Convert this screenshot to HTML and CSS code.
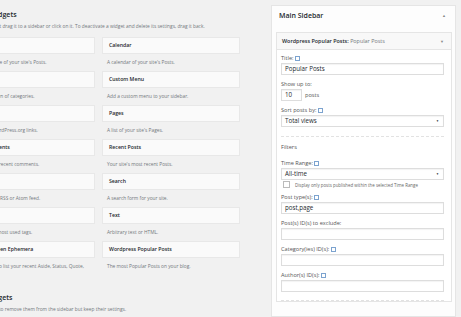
FILE: index.html
```html
<!DOCTYPE html>
<html lang="en">
<head>
    <meta charset="UTF-8">
    <title>Widgets</title>
    <link rel="stylesheet" href="styles.css">
</head>
<body>
<div class="wrap">

    <!-- Available widgets -->
    <div class="widgets-area">
        <h3 class="area-title">Available Widgets</h3>
        <p class="area-desc">To activate a widget drag it to a sidebar or click on it. To deactivate a widget and delete its settings, drag it back.</p>

        <div class="widget-grid">
            <div class="widget"><div class="widget-top">Archives</div><p class="widget-desc">A monthly archive of your site's Posts.</p></div>
            <div class="widget"><div class="widget-top">Calendar</div><p class="widget-desc">A calendar of your site's Posts.</p></div>
            <div class="widget"><div class="widget-top">Categories</div><p class="widget-desc">A list or dropdown of categories.</p></div>
            <div class="widget"><div class="widget-top">Custom Menu</div><p class="widget-desc">Add a custom menu to your sidebar.</p></div>
            <div class="widget"><div class="widget-top">Meta</div><p class="widget-desc">Login, RSS, &amp; WordPress.org links.</p></div>
            <div class="widget"><div class="widget-top">Pages</div><p class="widget-desc">A list of your site's Pages.</p></div>
            <div class="widget"><div class="widget-top">Recent Comments</div><p class="widget-desc">Your site's most recent comments.</p></div>
            <div class="widget"><div class="widget-top">Recent Posts</div><p class="widget-desc">Your site's most recent Posts.</p></div>
            <div class="widget"><div class="widget-top">RSS</div><p class="widget-desc">Entries from any RSS or Atom feed.</p></div>
            <div class="widget"><div class="widget-top">Search</div><p class="widget-desc">A search form for your site.</p></div>
            <div class="widget"><div class="widget-top">Tag Cloud</div><p class="widget-desc">A cloud of your most used tags.</p></div>
            <div class="widget"><div class="widget-top">Text</div><p class="widget-desc">Arbitrary text or HTML.</p></div>
            <div class="widget"><div class="widget-top">Twenty Fourteen Ephemera</div><p class="widget-desc">Use this widget to list your recent Aside, Status, Quote,</p></div>
            <div class="widget"><div class="widget-top">Wordpress Popular Posts</div><p class="widget-desc">The most Popular Posts on your blog.</p></div>
        </div>

        <h3 class="area-title inactive">Inactive Widgets</h3>
        <p class="area-desc">Drag widgets here to remove them from the sidebar but keep their settings.</p>
    </div>

    <!-- Sidebar -->
    <div class="sidebar">
        <div class="sidebar-head">
            <span>Main Sidebar</span>
            <span class="arrow">&#9650;</span>
        </div>

        <div class="open-widget">
            <div class="open-widget-top">
                <span><b>Wordpress Popular Posts:</b> <span class="instance">Popular Posts</span></span>
                <span class="arrow">&#9660;</span>
            </div>
            <div class="open-widget-body">
                <label class="field-label">Title: <span class="help"></span></label>
                <div class="input">Popular Posts</div>

                <label class="field-label">Show up to:</label>
                <div class="inline-row"><div class="input small">10</div><span class="unit">posts</span></div>

                <label class="field-label">Sort posts by: <span class="help"></span></label>
                <div class="input select">Total views<span class="caret">&#9660;</span></div>

                <hr class="sep">

                <div class="section-title">Filters</div>

                <label class="field-label">Time Range: <span class="help"></span></label>
                <div class="input select flush">All-time<span class="caret">&#9660;</span></div>
                <div class="check-row"><span class="checkbox"></span>Display only posts published within the selected Time Range</div>

                <label class="field-label">Post type(s): <span class="help"></span></label>
                <div class="input">post,page</div>

                <label class="field-label">Post(s) ID(s) to exclude:</label>
                <div class="input"></div>

                <label class="field-label">Category(ies) ID(s): <span class="help"></span></label>
                <div class="input"></div>

                <label class="field-label">Author(s) ID(s): <span class="help"></span></label>
                <div class="input"></div>

                <hr class="sep end">
            </div>
        </div>
    </div>

</div>
</body>
</html>
```

FILE: styles.css
```css
body {
    margin: 0;
    background: #f1f1f1;
    font-family: 'Open Sans', 'Liberation Sans', sans-serif;
    color: #23282d;
    overflow: hidden;
}

.wrap {
    display: flex;
    width: 461px;
    height: 317px;
    overflow: hidden;
}

/* Left: available widgets */
.widgets-area {
    flex: none;
    width: 283px;
    margin-left: -43px;
}

.area-title {
    margin: 10px 0 0;
    font-size: 7px;
    line-height: 9px;
    font-weight: 600;
}

.area-desc {
    margin: 3px 0 0;
    font-size: 4.8px;
    line-height: 8px;
    color: #72777c;
    white-space: nowrap;
}

.widget-grid {
    display: grid;
    grid-template-columns: 138px 138px;
    column-gap: 7px;
    margin-top: 7px;
}

.widget {
    height: 34px;
}

.widget-top {
    height: 17px;
    padding-left: 6px;
    background: #fafafa;
    border: 1px solid #e8e8e8;
    box-sizing: border-box;
    font-size: 5.2px;
    font-weight: 600;
    line-height: 15px;
    white-space: nowrap;
}

.widget-desc {
    margin: 0;
    padding-left: 5px;
    font-size: 4.8px;
    line-height: 17px;
    color: #72777c;
    white-space: nowrap;
}

.area-title.inactive {
    margin-top: 18px;
}

/* Right: sidebar */
.sidebar {
    flex: none;
    width: 185px;
    margin: 5px 0 0 31px;
    background: #fdfdfd;
    border: 1px solid #e5e5e5;
    box-sizing: border-box;
}

.sidebar-head {
    display: flex;
    justify-content: space-between;
    align-items: flex-start;
    height: 26px;
    padding: 5px 9px 0 7px;
    box-sizing: border-box;
    font-size: 7px;
    line-height: 9px;
    font-weight: 600;
}

.arrow {
    font-size: 4px;
    color: #888;
}

.open-widget {
    margin: 0 3px 0 4px;
    border: 1px solid #e5e5e5;
    background: #fff;
}

.open-widget-top {
    display: flex;
    justify-content: space-between;
    align-items: center;
    height: 16px;
    padding: 0 7px 0 5px;
    background: #f8f8f8;
    border-bottom: 1px solid #e5e5e5;
    font-size: 5.4px;
}

.open-widget-top b {
    font-weight: 600;
}

.instance {
    color: #72777c;
}

.open-widget-body {
    padding: 4px 7px 0 4px;
}

.field-label {
    display: block;
    font-size: 5.6px;
    line-height: 9px;
    color: #555;
}

.help {
    display: inline-block;
    width: 3px;
    height: 3px;
    border: 1px solid #7ca3cf;
    vertical-align: middle;
}

.input {
    height: 12px;
    margin-bottom: 5px;
    padding-left: 3px;
    border: 1px solid #ddd;
    box-sizing: border-box;
    background: #fff;
    font-size: 6.2px;
    line-height: 10px;
    box-shadow: inset 0 1px 1px rgba(0, 0, 0, 0.05);
}

.inline-row {
    display: flex;
    align-items: flex-start;
}

.input.small {
    width: 21px;
}

.unit {
    margin-left: 3px;
    font-size: 5.6px;
    line-height: 12px;
    color: #555;
}

.input.select {
    display: flex;
    justify-content: space-between;
    padding-right: 4px;
}

.input.flush {
    margin-bottom: 0;
}

.caret {
    font-size: 3px;
}

.sep {
    margin: 9px 0 0;
    border: 0;
    border-top: 1px dashed #e2e2e2;
}

.sep.end {
    margin-top: 8px;
}

.section-title {
    margin: 6px 0 7px;
    font-size: 5.6px;
    line-height: 9px;
    color: #555;
}

.check-row {
    display: flex;
    align-items: center;
    height: 7px;
    margin: 1px 0 5px 2px;
    font-size: 4.4px;
    color: #666;
    white-space: nowrap;
}

.checkbox {
    flex: none;
    width: 5px;
    height: 5px;
    margin-right: 5px;
    border: 1px solid #bbb;
    background: #fff;
}
```
